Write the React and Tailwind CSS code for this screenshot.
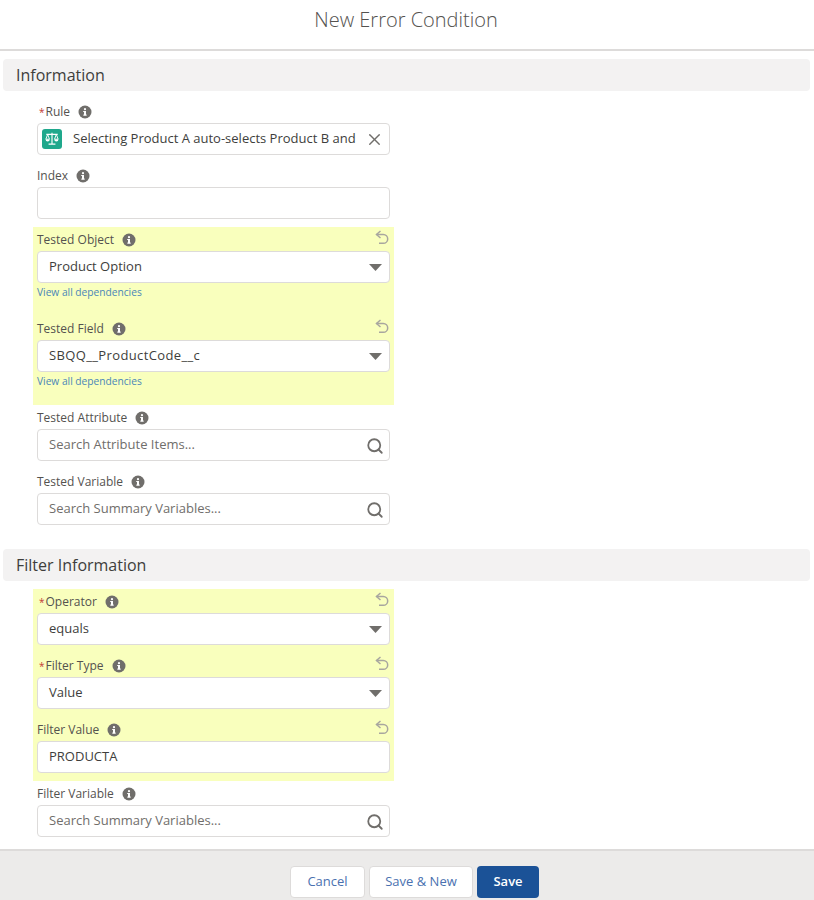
import { Search, X } from "lucide-react";

function InfoIcon() {
  return (
    <svg width="14" height="14" viewBox="0 0 14 14" className="shrink-0">
      <circle cx="7" cy="7" r="6.5" fill="#706e6b" />
      <rect x="6" y="6" width="2" height="4.4" fill="#fff" />
      <rect x="5.2" y="6" width="1.6" height="1" fill="#fff" />
      <rect x="5.2" y="9.6" width="3.6" height="1" fill="#fff" />
      <circle cx="7" cy="4.2" r="1.1" fill="#fff" />
    </svg>
  );
}

function UndoIcon() {
  return (
    <svg width="14" height="15" viewBox="0 0 14 15" fill="none" stroke="#a8a69f" strokeWidth="1.5" className="mr-[1px] mb-[5px] ml-auto shrink-0">
      <path d="M5.5 1 1.5 4.5l4 3.5" />
      <path d="M1.5 4.5h6.8a4.4 4.4 0 0 1 0 8.8H4" />
    </svg>
  );
}

function RuleIcon() {
  return (
    <span className="flex h-5 w-5 shrink-0 items-center justify-center rounded-[3px] bg-[#1fa88c]">
      <svg width="16" height="16" viewBox="0 0 14 14" fill="none" stroke="#fff" strokeWidth="1">
        <path d="M2 3h10M7 1.5v9.5M4 11.5h6" />
        <path d="M3.2 3 1.6 7.2h3.2zM10.8 3 9.2 7.2h3.2z" strokeWidth="0.8" />
        <path d="M1.4 7.4a1.8 1.8 0 0 0 3.6 0zM9 7.4a1.8 1.8 0 0 0 3.6 0z" fill="#fff" stroke="none" />
      </svg>
    </span>
  );
}

function Caret() {
  return (
    <svg width="13" height="7" viewBox="0 0 13 7" className="shrink-0">
      <path d="M0 0h13L6.5 7z" fill="#706e6b" />
    </svg>
  );
}

function Label({ text, required, undo }) {
  return (
    <div className={`flex h-[22px] items-center ${required ? "pl-[2px]" : ""}`}>
      {required && <span className="mr-[1px] text-[10px] leading-none text-[#c23934]">*</span>}
      <span className="text-[12px] text-[#54524f]">{text}</span>
      <span className="ml-[8px]">
        <InfoIcon />
      </span>
      {undo && <UndoIcon />}
    </div>
  );
}

function Input({ value, placeholder, trailing, wide }) {
  return (
    <div className="flex h-8 items-center rounded border border-[#dddbda] bg-white pr-[5px] pl-[11px] text-[13px]">
      <span className={`${value ? "text-[#3e3e3c]" : "text-[#706e6b]"} ${wide ? "tracking-[0.37px]" : ""}`}>{value || placeholder}</span>
      <span className="ml-auto flex items-center">{trailing}</span>
    </div>
  );
}

function SelectField({ label, value, required, link, wide, className }) {
  return (
    <div className={className}>
      <Label text={label} required={required} undo />
      <Input value={value} wide={wide} trailing={<span className="pr-[2px]"><Caret /></span>} />
      {link && <div className="mt-[2px] text-[10.2px] leading-[14px] text-[#4a86b8]">View all dependencies</div>}
    </div>
  );
}

function SearchField({ label, placeholder, className }) {
  return (
    <div className={className}>
      <Label text={label} />
      <Input placeholder={placeholder} trailing={<Search size={18} strokeWidth={2.4} className="translate-y-[1px] text-[#706e6b]" />} />
    </div>
  );
}

function SectionBar({ title, className }) {
  return (
    <div className={`mx-[3px] flex h-8 w-[807px] items-center rounded bg-[#f3f2f2] pb-[1px] pl-[13px] text-[16px] text-[#3e3e3c] ${className}`}>
      {title}
    </div>
  );
}

export default function App() {
  return (
    <div className="flex h-[900px] w-[814px] flex-col overflow-hidden bg-white font-['Open_Sans',sans-serif]">
      <header className="flex h-[51px] shrink-0 items-center justify-center border-b-2 border-[#dddbda] pr-[2px] pb-[9px] text-[20px] font-light text-[#54524f]">
        New Error Condition
      </header>

      <SectionBar title="Information" className="mt-2" />

      <div className="ml-[37px] mt-[10px] w-[353px]">
        <div className="h-[64px]">
          <Label text="Rule" required />
          <div className="flex h-8 items-center rounded border border-[#dddbda] bg-white pr-[6px] pl-1 text-[13px] text-[#3e3e3c]">
            <RuleIcon />
            <span className="ml-[11px] whitespace-nowrap">Selecting Product A auto-selects Product B and</span>
            <X size={19} strokeWidth={1.7} className="ml-auto -mr-[1px] text-[#706e6b]" />
          </div>
        </div>
        <div className="h-[62px]">
          <Label text="Index" />
          <Input />
        </div>
      </div>

      <div className="ml-[33px] w-[361px] bg-[#f9ffbd] px-1 pt-[2px]">
        <SelectField label="Tested Object" value="Product Option" link className="h-[89px]" />
        <SelectField label="Tested Field" value="SBQQ__ProductCode__c" link wide className="h-[87px]" />
      </div>

      <div className="ml-[37px] mt-[2px] w-[353px]">
        <SearchField label="Tested Attribute" placeholder="Search Attribute Items..." className="h-[64px]" />
        <SearchField label="Tested Variable" placeholder="Search Summary Variables..." className="h-[64px]" />
      </div>

      <SectionBar title="Filter Information" className="mt-[14px]" />

      <div className="mt-2 ml-[33px] w-[361px] bg-[#f9ffbd] px-1 pt-[2px]">
        <SelectField label="Operator" value="equals" required className="h-[64px]" />
        <SelectField label="Filter Type" value="Value" required className="h-[64px]" />
        <div className="h-[62px]">
          <Label text="Filter Value" undo />
          <Input value="PRODUCTA" />
        </div>
      </div>

      <div className="ml-[37px] mt-[2px] w-[353px]">
        <SearchField label="Filter Variable" placeholder="Search Summary Variables..." />
      </div>

      <footer className="mt-3 flex flex-1 items-start justify-center gap-1 border-t-2 border-[#dddbda] bg-[#ecebea] pt-[15px] pl-[15px] text-[13px]">
        <button className="h-8 w-[75px] rounded border border-[#dddbda] bg-white text-[#4a71b0]">Cancel</button>
        <button className="h-8 w-[104px] rounded border border-[#dddbda] bg-white text-[#4a71b0]">Save &amp; New</button>
        <button className="h-8 w-[62px] rounded bg-[#1b5297] font-semibold text-white">Save</button>
      </footer>
    </div>
  );
}
